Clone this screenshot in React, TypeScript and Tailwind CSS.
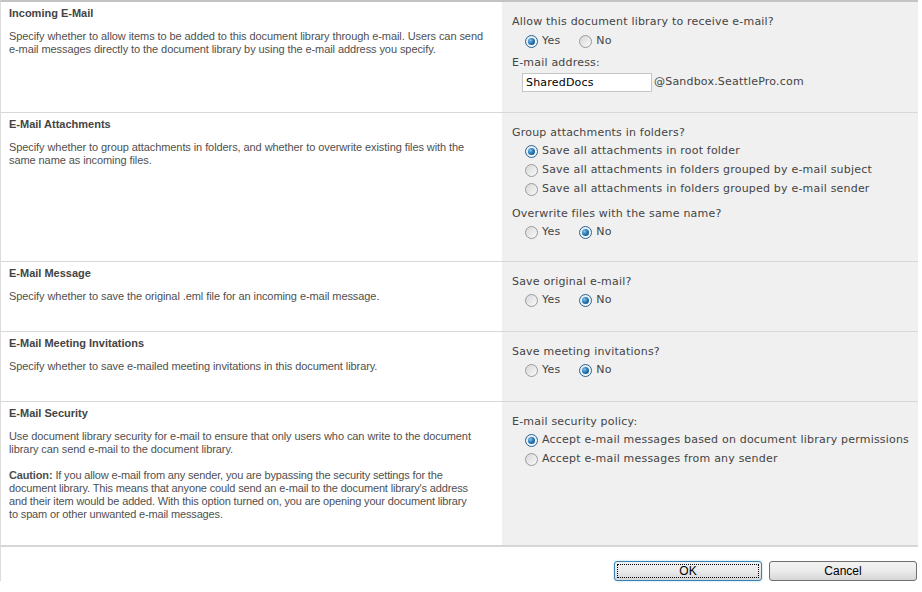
import React from 'react';

const Radio = ({ checked }: { checked?: boolean }) => (
  <span
    className={`inline-flex items-center justify-center w-[13px] h-[13px] rounded-full border shrink-0 ${
      checked
        ? 'border-[#2c628b] bg-gradient-to-br from-[#dfeaf4] to-[#f8fbfd]'
        : 'border-[#9a9a9a] bg-gradient-to-br from-[#d8d8d8] to-[#f9f9f9]'
    }`}
  >
    {checked && (
      <span className="w-[7px] h-[7px] rounded-full bg-[radial-gradient(circle_at_35%_35%,#7fc4ee_0%,#2a7ab8_45%,#10406a_100%)]" />
    )}
  </span>
);

const Option = ({ checked, label }: { checked?: boolean; label: string }) => (
  <label className="flex items-center gap-[4px] h-[19px]">
    <Radio checked={checked} />
    <span>{label}</span>
  </label>
);

const YesNo = ({ yes }: { yes: boolean }) => (
  <div className="flex items-center gap-[19px] pl-[13px] h-[19px]">
    <Option checked={yes} label="Yes" />
    <Option checked={!yes} label="No" />
  </div>
);

// one line of the left-hand description, kept on its own row
const Line = ({ children }: { children: React.ReactNode }) => (
  <span className="block whitespace-nowrap">{children}</span>
);

const Section = ({
  title,
  height,
  last,
  children,
  controls
}: {
  title: string;
  height: string;
  last?: boolean;
  children: React.ReactNode;
  controls: React.ReactNode;
}) => (
  <div className={`flex ${height} ${last ? 'border-b-2 border-[#d6d6d6]' : 'border-b border-[#d8d8d8]'}`}>
    <div className="w-[501px] shrink-0 pl-[8px] pr-[4px] pt-1 font-['Liberation_Sans',sans-serif] text-[11px] tracking-[-0.08px] text-[#505050]">
      <h3 className="font-bold leading-[14px] tracking-normal text-[#444]">{title}</h3>
      <div className="mt-[10px] leading-[13px]">{children}</div>
    </div>
    <div className="flex-1 bg-[#f0f0f0] pl-[10px] pt-[11px] font-['DejaVu_Sans',sans-serif] text-[11px] tracking-[0.2px] text-[#444]">
      {controls}
    </div>
  </div>
);

const Question = ({ text, className = '' }: { text: string; className?: string }) => (
  <div className={`h-[18px] leading-[18px] ${className}`}>{text}</div>
);

export default function App() {
  return (
    <div className="w-[922px] h-[592px] bg-white overflow-hidden">
      <div className="w-[918px] border-t-2 border-t-[#c4c4c4] border-l border-l-[#dcdcdc]">
        <Section
          title="Incoming E-Mail"
          height="h-[111px]"
          controls={
            <>
              <Question text="Allow this document library to receive e-mail?" />
              <div className="mt-[1px]">
                <YesNo yes />
              </div>
              <Question text="E-mail address:" className="mt-[3px]" />
              <div className="flex items-center pl-[10px] mt-[1px]">
                <div className="w-[130px] h-[19px] bg-white border border-[#c6c6c6] pl-[3px] leading-[17px] text-black">
                  SharedDocs
                </div>
                <span className="ml-[2px]">@Sandbox.SeattlePro.com</span>
              </div>
            </>
          }
        >
          <Line>Specify whether to allow items to be added to this document library through e-mail. Users can send</Line>
          <Line>e-mail messages directly to the document library by using the e-mail address you specify.</Line>
        </Section>

        <Section
          title="E-Mail Attachments"
          height="h-[149px]"
          controls={
            <>
              <Question text="Group attachments in folders?" />
              <div className="pl-[13px]">
                <Option checked label="Save all attachments in root folder" />
                <Option label="Save all attachments in folders grouped by e-mail subject" />
                <Option label="Save all attachments in folders grouped by e-mail sender" />
              </div>
              <Question text="Overwrite files with the same name?" className="mt-[6px]" />
              <YesNo yes={false} />
            </>
          }
        >
          <Line>Specify whether to group attachments in folders, and whether to overwrite existing files with the</Line>
          <Line>same name as incoming files.</Line>
        </Section>

        <Section
          title="E-Mail Message"
          height="h-[70px]"
          controls={
            <>
              <Question text="Save original e-mail?" />
              <YesNo yes={false} />
            </>
          }
        >
          <Line>Specify whether to save the original .eml file for an incoming e-mail message.</Line>
        </Section>

        <Section
          title="E-Mail Meeting Invitations"
          height="h-[70px]"
          controls={
            <>
              <Question text="Save meeting invitations?" />
              <YesNo yes={false} />
            </>
          }
        >
          <Line>Specify whether to save e-mailed meeting invitations in this document library.</Line>
        </Section>

        <Section
          title="E-Mail Security"
          height="h-[145px]"
          last
          controls={
            <>
              <Question text="E-mail security policy:" />
              <div className="pl-[13px]">
                <Option checked label="Accept e-mail messages based on document library permissions" />
                <Option label="Accept e-mail messages from any sender" />
              </div>
            </>
          }
        >
          <Line>Use document library security for e-mail to ensure that only users who can write to the document</Line>
          <Line>library can send e-mail to the document library.</Line>
          <div className="mt-[13px] tracking-[-0.15px]">
            <Line>
              <b className="mr-[3px]">Caution:</b>If you allow e-mail from any sender, you are bypassing the security settings for the
            </Line>
            <Line>document library. This means that anyone could send an e-mail to the document library&apos;s address</Line>
            <Line>and their item would be added. With this option turned on, you are opening your document library</Line>
            <Line>to spam or other unwanted e-mail messages.</Line>
          </div>
        </Section>

        <div className="flex justify-end gap-[7px] mt-[14px] pr-[1px] font-['Liberation_Sans',sans-serif] text-[12px] text-black">
          <button className="w-[148px] h-[20px] rounded-[3px] border border-[#3c7fb1] bg-gradient-to-b from-[#f2f2f2] via-[#ebebeb] to-[#d6d6d6] p-[2px] shadow-[0_0_2px_#8fd0f3]">
            <span className="flex items-center justify-center w-full h-full border border-dotted border-black leading-none">
              OK
            </span>
          </button>
          <button className="w-[148px] h-[20px] rounded-[3px] border border-[#707070] bg-gradient-to-b from-[#f2f2f2] via-[#ebebeb] to-[#d6d6d6] leading-none">
            Cancel
          </button>
        </div>
      </div>
    </div>
  );
}
